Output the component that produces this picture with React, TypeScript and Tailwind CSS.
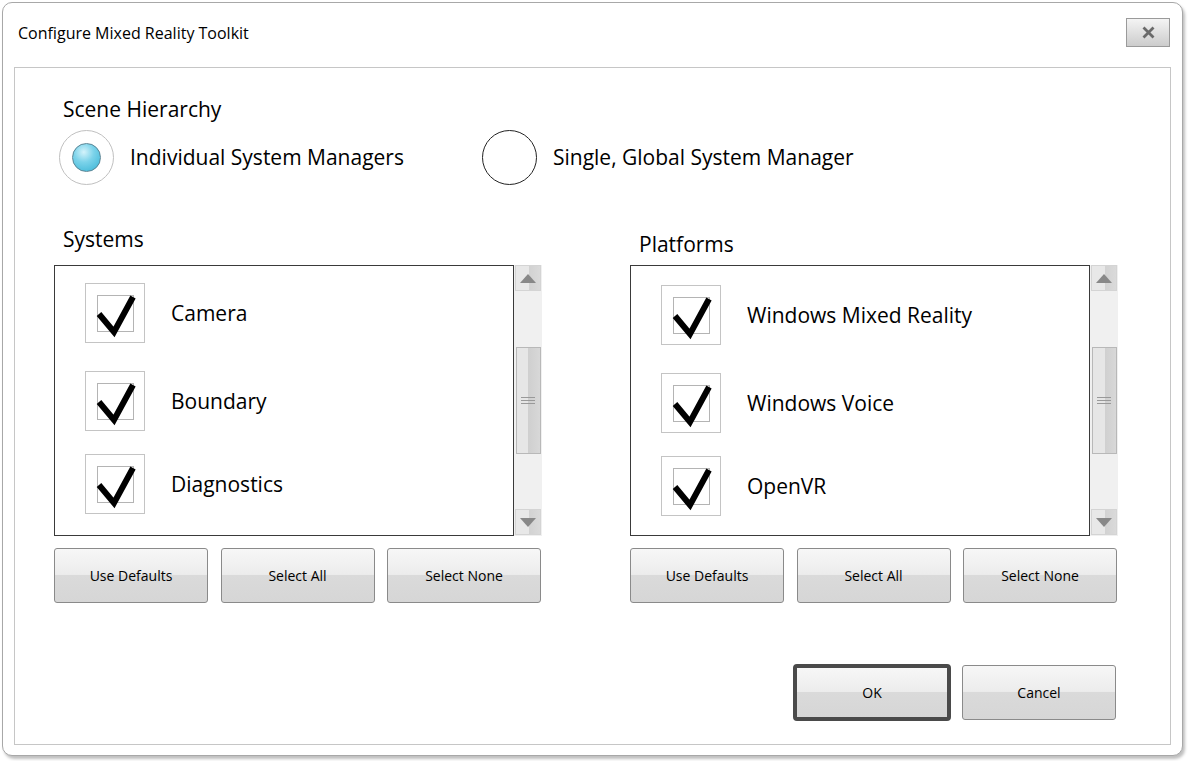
import React from "react";

const font = { fontFamily: '"Open Sans", "Noto Sans", sans-serif' };

function Check() {
  return (
    <div className="w-[60px] h-[60px] border border-[#c4c4c4] bg-white relative shrink-0">
      <div className="absolute left-[11px] top-[11px] w-[37px] h-[37px] border border-[#b4b4b4]" />
      <svg className="absolute left-0 top-0" width="60" height="60" viewBox="0 0 60 60">
        <polyline points="13,30 28,48 47,13" fill="none" stroke="#000" strokeWidth="6" strokeLinejoin="miter" strokeLinecap="butt" />
      </svg>
    </div>
  );
}

function Row({ label, mt }: { label: string; mt: string }) {
  return (
    <div className={`flex items-center ${mt}`}>
      <Check />
      <span className="ml-[26px] text-[21px] text-black leading-none">{label}</span>
    </div>
  );
}

function ScrollBar() {
  return (
    <div className="w-[28px] bg-[#f0f0f0] flex flex-col items-center">
      <div className="w-[26px] h-[26px] border border-[#d4d4d4] bg-[linear-gradient(to_right,#e8e8e8_0%,#e8e8e8_55%,#d2d2d2_55%,#dadada_100%)] flex items-center justify-center">
        <svg width="16" height="9" viewBox="0 0 16 9"><polygon points="0,9 8,0 16,9" fill="#888" /></svg>
      </div>
      <div className="mt-[56px] w-[25px] h-[107px] border border-[#b8b8b8] bg-[linear-gradient(to_right,#e6e6e6_0%,#e6e6e6_50%,#cfcfcf_50%,#d8d8d8_100%)] flex flex-col items-center justify-center gap-[2px]">
        <div className="w-[14px] h-[1px] bg-[#999]" />
        <div className="w-[14px] h-[1px] bg-[#999]" />
        <div className="w-[14px] h-[1px] bg-[#999]" />
      </div>
      <div className="mt-auto mb-[1px] w-[26px] h-[26px] border border-[#d4d4d4] bg-[linear-gradient(to_right,#e8e8e8_0%,#e8e8e8_55%,#d2d2d2_55%,#dadada_100%)] flex items-center justify-center">
        <svg width="16" height="9" viewBox="0 0 16 9"><polygon points="0,0 16,0 8,9" fill="#888" /></svg>
      </div>
    </div>
  );
}

function Btn({ label, w = "w-[154px]", h = "h-[55px]" }: { label: string; w?: string; h?: string }) {
  return (
    <div className={`${w} ${h} shrink-0 rounded-[3px] border border-[#8a8a8a] bg-[linear-gradient(to_bottom,#f7f7f7_0%,#ececec_48%,#dadada_50%,#d6d6d6_100%)] flex items-center justify-center text-[14px] text-black`}>
      {label}
    </div>
  );
}

function Column({ title, items, titleMt, listPt }: { title: string; items: string[]; titleMt: string; listPt: string }) {
  return (
    <div className="w-[488px] flex flex-col">
      <div className="h-[38px]">
        <div className={`ml-[9px] text-[21px] leading-[24px] text-black ${titleMt}`}>{title}</div>
      </div>
      <div className="flex h-[271px]">
        <div className={`w-[460px] border-[1.5px] border-[#3a3a3a] bg-white pl-[30px] ${listPt}`}>
          <Row label={items[0]} mt="" />
          <Row label={items[1]} mt="mt-[28px]" />
          <Row label={items[2]} mt="mt-[23px]" />
        </div>
        <ScrollBar />
      </div>
      <div className="mt-[12px] w-[487px] flex justify-between">
        <Btn label="Use Defaults" />
        <Btn label="Select All" />
        <Btn label="Select None" />
      </div>
    </div>
  );
}

export default function App() {
  return (
    <div className="w-[1188px] h-[761px] bg-white relative" style={font}>
      <div className="absolute left-[2px] top-[2px] w-[1181px] h-[754px] rounded-[10px] border border-[#a8a8a8] bg-white shadow-[2px_3px_3px_rgba(0,0,0,0.25)] flex flex-col">
        <div className="h-[64px] flex items-start justify-between pl-[15px] pr-[12px]">
          <div className="mt-[19px] text-[16px] leading-[22px] text-black">Configure Mixed Reality Toolkit</div>
          <div className="mt-[15px] w-[44px] h-[29px] border border-[#9a9a9a] bg-[linear-gradient(to_bottom,#f4f4f4_0%,#dedede_55%,#cccccc_100%)] flex items-center justify-center">
            <svg width="13" height="13" viewBox="0 0 13 13">
              <path d="M1.5 1.5 L11.5 11.5 M11.5 1.5 L1.5 11.5" stroke="#6a6a6a" strokeWidth="2.8" />
            </svg>
          </div>
        </div>
        <div className="ml-[11px] w-[1157px] h-[678px] border border-[#c6c6c6] flex flex-col pl-[39px]">
          <div className="mt-[29px] ml-[9px] text-[21px] leading-[24px] text-black">Scene Hierarchy</div>
          <div className="mt-[9px] flex items-center">
            <div className="ml-[5px] w-[55px] h-[55px] rounded-full border-[1.5px] border-[#c0c0c0] flex items-center justify-center">
              <div className="w-[29px] h-[29px] rounded-full border border-[#5a8595] bg-[radial-gradient(circle_at_40%_30%,#d4f3fb_0%,#7cd3ea_40%,#35b2d4_100%)]" />
            </div>
            <span className="ml-[16px] text-[21px] text-black">Individual System Managers</span>
            <div className="ml-[78px] w-[55px] h-[55px] rounded-full border border-[#222]" />
            <span className="ml-[16px] text-[21px] text-black">Single, Global System Manager</span>
          </div>
          <div className="mt-[42px] flex gap-[88px]">
            <Column title="Systems" items={["Camera", "Boundary", "Diagnostics"]} titleMt="" listPt="pt-[17px]" />
            <Column title="Platforms" items={["Windows Mixed Reality", "Windows Voice", "OpenVR"]} titleMt="mt-[5px]" listPt="pt-[19px]" />
          </div>
          <div className="mt-[61px] flex justify-end pr-[54px] gap-[11px] items-center">
            <div className="w-[158px] h-[57px] rounded-[4px] border-[4px] border-[#4a4a4a] bg-[linear-gradient(to_bottom,#f7f7f7_0%,#ececec_48%,#dadada_50%,#d6d6d6_100%)] flex items-center justify-center text-[14px] text-black">
              OK
            </div>
            <Btn label="Cancel" />
          </div>
        </div>
      </div>
    </div>
  );
}
